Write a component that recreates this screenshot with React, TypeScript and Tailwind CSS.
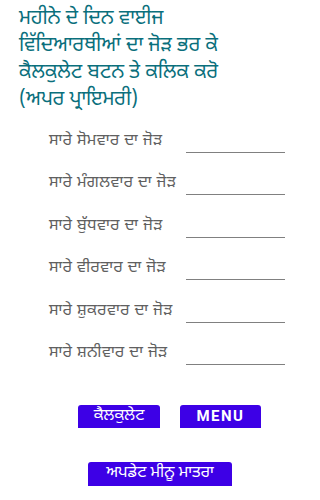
import React from "react";

const rows = [
  "ਸਾਰੇ ਸੋਮਵਾਰ ਦਾ ਜੋੜ",
  "ਸਾਰੇ ਮੰਗਲਵਾਰ ਦਾ ਜੋੜ",
  "ਸਾਰੇ ਬੁੱਧਵਾਰ ਦਾ ਜੋੜ",
  "ਸਾਰੇ ਵੀਰਵਾਰ ਦਾ ਜੋੜ",
  "ਸਾਰੇ ਸ਼ੁਕਰਵਾਰ ਦਾ ਜੋੜ",
  "ਸਾਰੇ ਸ਼ਨੀਵਾਰ ਦਾ ਜੋੜ",
];

export default function App() {
  return (
    <div
      className="w-[320px] h-[500px] bg-white overflow-hidden"
      style={{ fontFamily: '"Noto Sans Gurmukhi", "Noto Sans", "Lohit Gurmukhi", sans-serif' }}
    >
      <div className="pl-[19px] pt-[6px] pr-2 text-[20px] leading-[27px] text-[#0a6f7c]">
        <div>ਮਹੀਨੇ ਦੇ ਦਿਨ ਵਾਈਜ</div>
        <div>ਵਿੱਦਿਆਰਥੀਆਂ ਦਾ ਜੋੜ ਭਰ ਕੇ</div>
        <div>ਕੈਲਕੁਲੇਟ ਬਟਨ ਤੇ ਕਲਿਕ ਕਰੋ</div>
        <div>(ਅਪਰ ਪ੍ਰਾਇਮਰੀ)</div>
      </div>
      <div className="flex flex-col pt-[15px]">
        {rows.map((r) => (
          <div key={r} className="flex h-[42.4px] items-start">
            <div className="w-[186px] pl-[49px] pt-[4px] text-[16px] leading-[18px] tracking-[0.4px] text-[#606060] whitespace-nowrap">
              {r}
            </div>
            <div className="w-[99px] h-[24px] border-b border-[#808080]" />
          </div>
        ))}
      </div>
      <div className="flex pl-[78px] gap-[20px] pt-[22px]">
        <button className="w-[82px] h-[23px] bg-[#3d00e6] rounded-t-[3px] text-white text-[16px] leading-[23px]">
          ਕੈਲਕੁਲੇਟ
        </button>
        <button
          className="w-[81px] h-[23px] bg-[#3d00e6] rounded-t-[3px] text-white text-[15px] font-bold tracking-[1.5px] leading-[23px]"
          style={{ fontFamily: "Roboto, sans-serif" }}
        >
          MENU
        </button>
      </div>
      <div className="flex pl-[88px] pt-[34px]">
        <button className="w-[144px] h-[24px] bg-[#3d00e6] rounded-t-[3px] text-white text-[16px] leading-[24px] whitespace-nowrap">
          ਅਪਡੇਟ ਮੀਨੂ ਮਾਤਰਾ
        </button>
      </div>
    </div>
  );
}
